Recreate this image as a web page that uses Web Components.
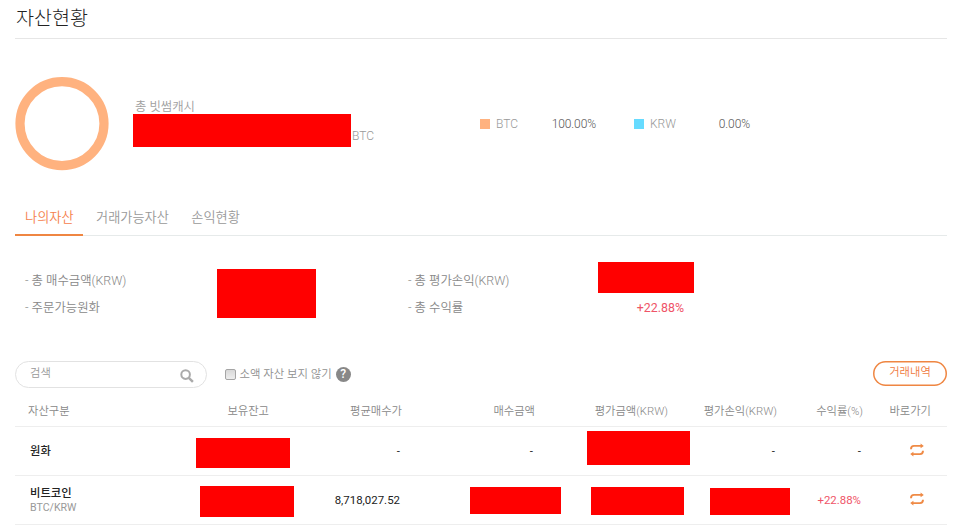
<!DOCTYPE html>
<html lang="ko">
<head>
<meta charset="utf-8">
<title>자산현황</title>
<style>
    html, body { margin: 0; padding: 0; background: #fff; }
    body {
        width: 960px;
        height: 532px;
        overflow: hidden;
        font-family: Roboto, "Noto Sans CJK KR", sans-serif;
        color: #999;
    }
</style>
</head>
<body>
<asset-page></asset-page>

<script>
function define(name, html, setup) {
    const template = document.createElement('template');
    template.innerHTML = html;
    window.customElements.define(name, class extends HTMLElement {
        constructor() {
            super();
            this.attachShadow({ mode: 'open' });
            this.shadowRoot.appendChild(template.content.cloneNode(true));
        }
        connectedCallback() {
            if (setup) setup(this, this.shadowRoot);
        }
    });
}

// masked amount: w, h = size
define('mask-box', `
    <style>
        :host { display: block; flex: none; box-sizing: border-box; background: #f00; }
    </style>
`, function(el) {
    el.style.width = el.getAttribute('w') + 'px';
    el.style.height = el.getAttribute('h') + 'px';
});

define('page-title', `
    <style>
        :host { display: block; box-sizing: border-box; height: 39px; padding-left: 1px; border-bottom: 1px solid #e6e6e6; }
        h1 { margin: 0; font-size: 19.6px; line-height: 37px; font-weight: 300; color: #222; }
    </style>
    <h1><slot></slot></h1>
`);

define('donut-chart', `
    <style>
        :host { display: block; width: 94px; height: 94px; flex: none; }
        svg { display: block; }
    </style>
    <svg width="94" height="94" viewBox="0 0 94 94">
        <circle cx="47" cy="46.6" r="42" fill="none" stroke="#ffb27f" stroke-width="9.2"/>
    </svg>
`);

define('legend-item', `
    <style>
        :host { display: flex; align-items: center; font-size: 12px; line-height: 16px; font-weight: 300; }
        i { width: 10px; height: 10px; margin-right: 6px; background: var(--dot); }
        .name { flex: 1; color: #999; }
        .value { color: #555; letter-spacing: -.1px; }
    </style>
    <i></i><span class="name"><slot></slot></span><span class="value"><slot name="value"></slot></span>
`);

define('asset-summary', `
    <style>
        :host { display: flex; height: 164px; box-sizing: border-box; padding-top: 38px; }
        .cash { width: 347px; margin-left: 24px; padding-top: 20px; }
        .label { margin-left: 2px; height: 17px; line-height: 19px; font-size: 12.4px; font-weight: 350; color: #a0a0a0; }
        .amount { display: flex; align-items: flex-end; }
        .unit { font-size: 12px; line-height: 16px; margin: 0 0 3px 1px; font-weight: 300; }
        .legend { display: flex; align-items: flex-start; padding-top: 39px; }
        .btc { --dot: #ffb27f; width: 116px; }
        .krw { --dot: #66dbff; width: 116px; margin-left: 38px; }
    </style>
    <donut-chart></donut-chart>
    <div class="cash">
        <div class="label">총 빗썸캐시</div>
        <div class="amount"><mask-box w="218" h="33"></mask-box><span class="unit">BTC</span></div>
    </div>
    <div class="legend">
        <legend-item class="btc">BTC<span slot="value">100.00%</span></legend-item>
        <legend-item class="krw">KRW<span slot="value">0.00%</span></legend-item>
    </div>
`);

define('tab-item', `
    <style>
        :host { display: block; box-sizing: border-box; height: 33px; padding: 0 9px 0 10px; margin-right: 3.5px; font-size: 13.2px; line-height: 29px; font-weight: 350; color: #999; white-space: nowrap; }
        :host([active]) { color: #f5814c; border-bottom: 2px solid #ef8642; }
    </style>
    <slot></slot>
`);

define('tab-bar', `
    <style>
        :host { display: flex; height: 32px; border-bottom: 1px solid #e6eaea; }
    </style>
    <slot></slot>
`);

define('fact-line', `
    <style>
        :host { display: flex; height: 27.5px; align-items: center; font-size: 12.4px; white-space: nowrap; color: #888; font-weight: 350; }
        .value { margin-left: auto; color: #ef5468; font-weight: 400; }
    </style>
    <span>- <slot></slot></span><span class="value"><slot name="value"></slot></span>
`);

define('asset-facts', `
    <style>
        :host { display: flex; height: 125px; box-sizing: border-box; padding-left: 10px; }
        .lines { padding-top: 30px; }
        .a { width: 192px; }
        .b { width: 190px; margin-left: 92px; }
        .c { width: 276px; position: relative; }
        .m1 { margin-top: 33px; }
        .over { position: absolute; left: 190px; top: 26px; }
    </style>
    <div class="lines a">
        <fact-line>총 매수금액(KRW)</fact-line>
        <fact-line>주문가능원화</fact-line>
    </div>
    <mask-box class="m1" w="99" h="49"></mask-box>
    <div class="lines b c">
        <fact-line>총 평가손익(KRW)</fact-line>
        <fact-line>총 수익률<span slot="value">+22.88%</span></fact-line>
        <mask-box class="over" w="96" h="31"></mask-box>
    </div>
`);

define('search-box', `
    <style>
        :host { display: flex; align-items: center; box-sizing: border-box; width: 192px; height: 27px; padding: 0 12px 0 14px; border: 1px solid #e2e2e2; border-radius: 14px; font-size: 11.3px; font-weight: 350; }
        span { flex: 1; line-height: 22px; padding-bottom: 1px; }
        svg { display: block; margin-top: 3px; }
    </style>
    <span><slot></slot></span>
    <svg width="14" height="14" viewBox="0 0 14 14" fill="none" stroke="#aaa">
        <circle cx="5.6" cy="5.6" r="4.3" stroke-width="2"/>
        <path d="M8.8 8.8l4.1 4.1" stroke-width="2.4"/>
    </svg>
`);

define('small-filter', `
    <style>
        :host { display: flex; align-items: center; font-size: 11.4px; line-height: 16px; font-weight: 350; color: #909090; }
        .check { width: 9px; height: 9px; border: 1px solid #a5a5a5; border-radius: 2px; background: linear-gradient(#d8d8d8, #eee); margin-right: 4px; }
        .help { width: 15px; height: 15px; margin-left: 4px; border-radius: 50%; background: #888; color: #fff; font: 500 12px/15px Roboto, sans-serif; text-align: center; }
    </style>
    <span class="check"></span><slot></slot><span class="help">?</span>
`);

define('pill-button', `
    <style>
        :host { display: block; box-sizing: border-box; width: 74px; height: 25px; box-shadow: inset 0 0 0 1.5px #ef8642; border-radius: 13px; font-size: 11.3px; line-height: 24px; text-align: center; color: #f07a40; font-weight: 350; }
    </style>
    <slot></slot>
`);

define('tool-bar', `
    <style>
        :host { display: flex; height: 34px; align-items: flex-start; }
        small-filter { margin: 5px 0 0 17.5px; }
        pill-button { margin-left: auto; }
    </style>
    <search-box>검색</search-box>
    <small-filter>소액 자산 보지 않기</small-filter>
    <pill-button>거래내역</pill-button>
`);

define('trade-icon', `
    <style>
        :host { display: block; width: 14px; height: 14px; }
        svg { display: block; }
    </style>
    <svg width="14" height="14" viewBox="0 0 14 14">
        <path d="M1 6.2Q1 2.9 4 2.9H11M13 7.8Q13 11.1 10 11.1H3" fill="none" stroke="#ef8a45" stroke-width="1.9"/>
        <path d="M10.6 .6L13.8 2.9L10.6 5.2ZM3.4 8.8L.2 11.1L3.4 13.4Z" fill="#ef8a45"/>
    </svg>
`);

define('table-row', `
    <style>
        :host {
            display: grid;
            grid-template-columns: 120px 134px 133px 133px 133px 109px 86px 68px;
            align-items: center;
            justify-items: end;
            box-sizing: border-box;
            height: 49px;
            padding-right: 16px;
            border-bottom: 1px solid #eee;
            font-size: 11.45px;
            line-height: 15px;
            color: #222;
            white-space: nowrap;
        }
        :host([head]) { height: 32px; padding-top: 2px; font-size: 11.3px; color: #888; font-weight: 350; }
        ::slotted(:first-child) { justify-self: start; padding-left: 15px; }
        :host([head]) ::slotted(:first-child) { padding-left: 13px; }
    </style>
    <slot></slot>
`);

define('asset-page', `
    <style>
        :host { display: block; width: 932px; margin-left: 15px; }
        .num { margin: 1px 2px 0 0; }
        .rate { margin: 1px 2px 0 0; color: #ef5468; }
        .name { font-size: 11.3px; font-weight: 500; padding-top: 1px; }
        .pair { display: block; font-size: 10.6px; line-height: 14px; font-weight: 400; color: #999; }
        trade-icon { margin: -3px 7px 0 0; }
    </style>
    <page-title>자산현황</page-title>
    <asset-summary></asset-summary>
    <tab-bar>
        <tab-item active>나의자산</tab-item>
        <tab-item>거래가능자산</tab-item>
        <tab-item>손익현황</tab-item>
    </tab-bar>
    <asset-facts></asset-facts>
    <tool-bar></tool-bar>
    <table-row head>
        <span>자산구분</span><span>보유잔고</span><span>평균매수가</span><span>매수금액</span>
        <span>평가금액(KRW)</span><span>평가손익(KRW)</span><span>수익률(%)</span><span>바로가기</span>
    </table-row>
    <table-row>
        <span class="name">원화</span>
        <mask-box w="94" h="30" style="margin: 4px -21px 0 0"></mask-box>
        <span class="num">-</span>
        <span class="num">-</span>
        <mask-box w="103" h="34" style="margin: -6px -22px 0 0"></mask-box>
        <span class="num">-</span>
        <span class="num">-</span>
        <trade-icon></trade-icon>
    </table-row>
    <table-row>
        <span class="name">비트코인<span class="pair">BTC/KRW</span></span>
        <mask-box w="94" h="31" style="margin: 3px -25px 0 0"></mask-box>
        <span class="num">8,718,027.52</span>
        <mask-box w="91" h="27" style="margin: 1px -26px 0 0"></mask-box>
        <mask-box w="93" h="28" style="margin: 1px -16px 0 0"></mask-box>
        <mask-box w="80" h="27" style="margin: 3px -13px 0 0"></mask-box>
        <span class="rate">+22.88%</span>
        <trade-icon></trade-icon>
    </table-row>
</asset-page>
`);
</script>
</body>
</html>
